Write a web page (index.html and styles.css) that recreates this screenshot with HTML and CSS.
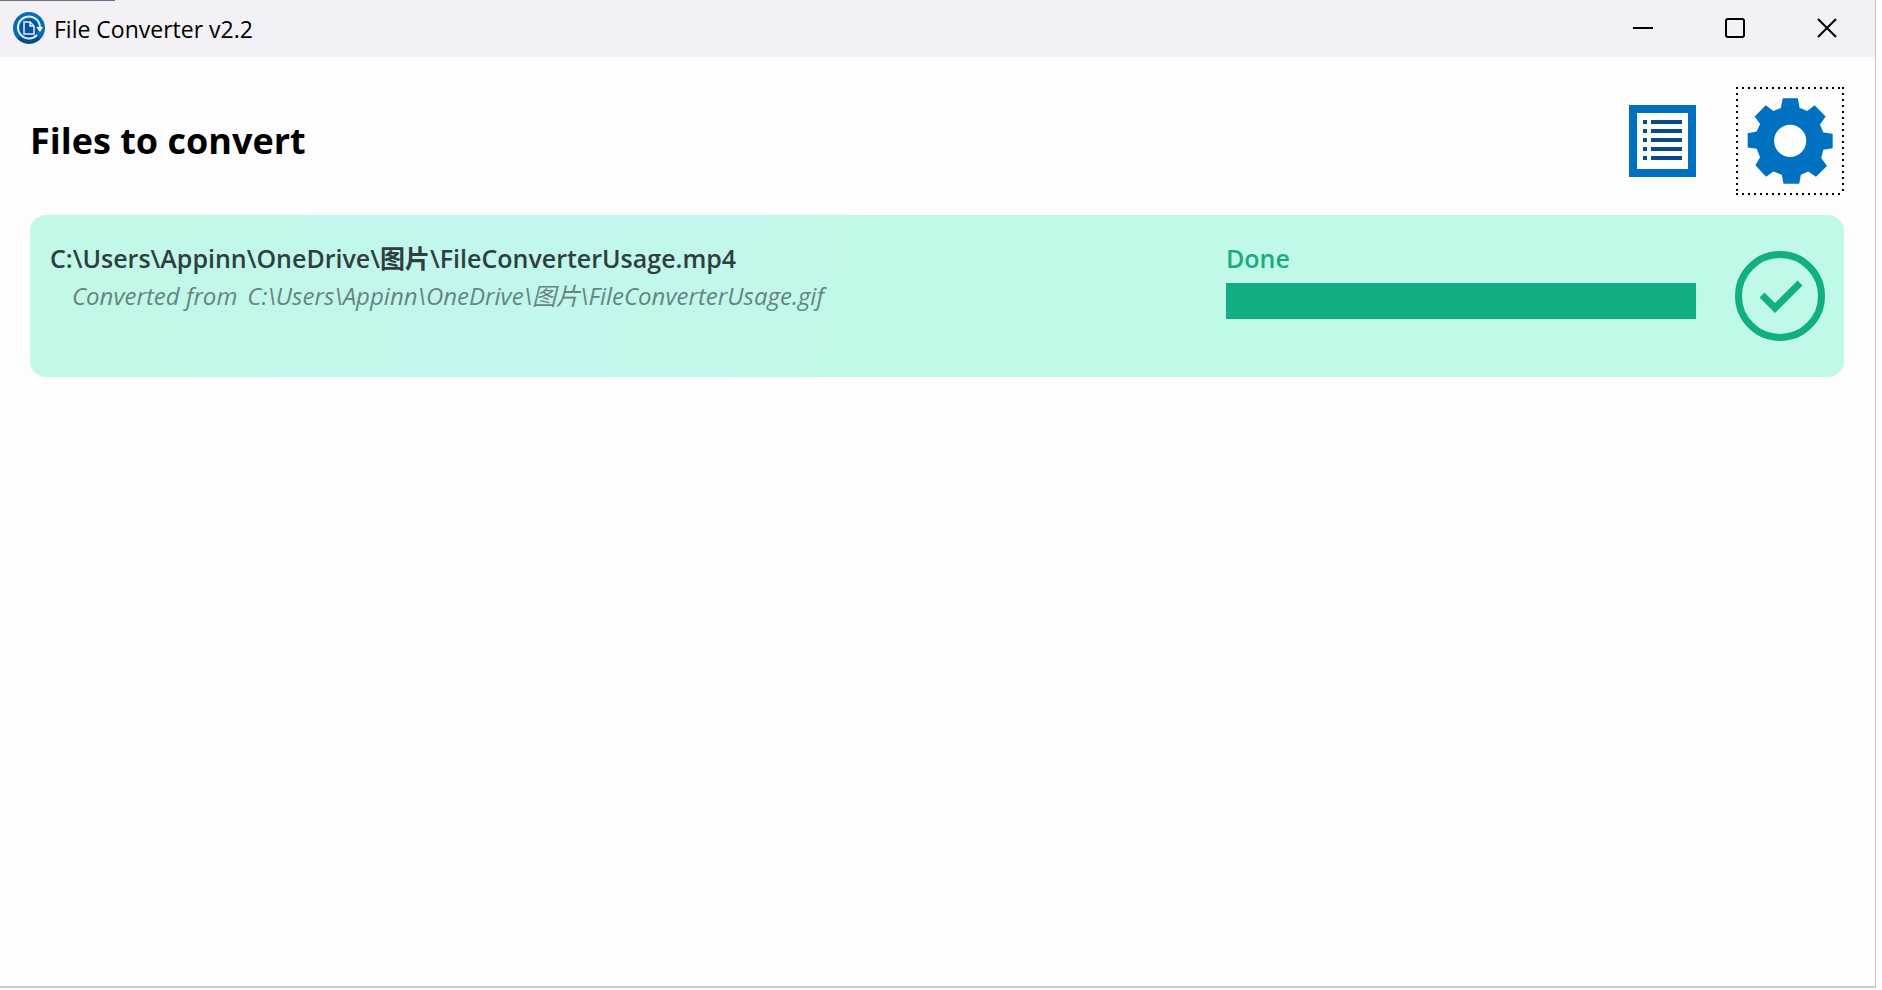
FILE: index.html
```
<!DOCTYPE html>
<html lang="en">
<head>
    <meta charset="UTF-8">
    <meta name="viewport" content="width=device-width, initial-scale=1.0">
    <title>File Converter v2.2</title>
    <link rel="stylesheet" href="styles.css">
</head>
<body>
<div class="window">
    <header class="titlebar">
        <svg class="app-icon" viewBox="0 0 32 32" aria-hidden="true">
            <circle cx="16" cy="16" r="16" fill="#0a6cb8"/>
            <path d="M5 27 A16 16 0 0 0 27 27 L24 22 L8 22Z" fill="#07498b"/>
            <circle cx="16" cy="16" r="9" fill="#07529a"/>
            <path d="M24 23 A11 11 0 1 1 27 15" fill="none" stroke="#e4f1fb" stroke-width="2"/>
            <path d="M23 15h7l-3 5z" fill="#fff"/>
            <path d="M11 10h6l4 4v8H11z M17 10v4h4" fill="none" stroke="#e4f1fb" stroke-width="1.5"/>
        </svg>
        <span class="caption">File Converter v2.2</span>
        <div class="controls">
            <button type="button" aria-label="Minimize">
                <svg viewBox="0 0 20 20"><path d="M0 10h20"/></svg>
            </button>
            <button type="button" aria-label="Maximize">
                <svg viewBox="0 0 20 20"><rect x="1" y="1" width="18" height="18" rx="2"/></svg>
            </button>
            <button type="button" aria-label="Close">
                <svg viewBox="0 0 20 20"><path d="M1 1l18 18M19 1L1 19"/></svg>
            </button>
        </div>
    </header>

    <main>
        <div class="toolbar">
            <h1>Files to convert</h1>
            <button type="button" class="tool" aria-label="Show logs">
                <svg class="list-icon" viewBox="0 0 67 72">
                    <rect x="4" y="4" width="59" height="64" fill="#fff" stroke="#0070c0" stroke-width="8"/>
                    <path d="M14 17h4M14 26h4M14 35h4M14 44h4M14 53h4M22 17h31M22 26h31M22 35h31M22 44h31M22 53h31" stroke="#064b8f" stroke-width="4"/>
                </svg>
            </button>
            <button type="button" class="tool focused" aria-label="Settings">
                <svg class="gear-icon" viewBox="0 0 257 257">
                    <path fill="#0070c0" fill-rule="evenodd" d="M107 1H152L157 29L180 39L202 22L235 55L218 79L228 103L256 107V150L228 155L222 179L239 203L206 235L183 220L161 229L156 256H109L104 229L79 220L57 235L25 201L39 177L29 152L2 148V105L29 100L39 78L23 55L56 22L79 39L101 30Z M129 80A48 48 0 1 0 129 176A48 48 0 1 0 129 80Z"/>
                </svg>
            </button>
        </div>

        <section class="job">
            <div class="paths">
                <h2>C:\Users\Appinn\OneDrive\图片\FileConverterUsage.mp4</h2>
                <p><span>Converted from</span><span>C:\Users\Appinn\OneDrive\图片\FileConverterUsage.gif</span></p>
            </div>
            <div class="status">
                <label for="job-progress">Done</label>
                <progress id="job-progress" value="100" max="100"></progress>
            </div>
            <svg class="check-icon" viewBox="0 0 90 90" aria-hidden="true">
                <circle cx="45" cy="45" r="41.5"/>
                <path d="M27 44L40 57L65 32"/>
            </svg>
        </section>
    </main>
</div>
</body>
</html>
```
FILE: styles.css
```
* {
    box-sizing: border-box;
}

body {
    margin: 0;
    background: #fff;
    color: #000;
    font-family: "Open Sans", "Noto Sans CJK SC", sans-serif;
}

.window {
    position: relative;
    min-height: calc(100vh - 2px);
    margin: 0 6px 2px 0;
    background: #fdfdfd;
    border-right: 1px solid #c4c4c6;
    border-bottom: 2px solid #cbcbcb;
}

/* sliver of the window behind */
.window::before {
    content: "";
    position: absolute;
    top: 0;
    left: 0;
    width: 115px;
    height: 1px;
    background: linear-gradient(90deg, #77727c, #5f7190);
}

/* title bar */
.titlebar {
    display: flex;
    align-items: center;
    padding: 0 0 1px 13px;
    background: #f3f1f5;
}

.app-icon {
    width: 32px;
    height: 32px;
}

.caption {
    flex: 1;
    margin-left: 9px;
    padding-top: 2px;
    font-size: 23px;
    line-height: 32px;
}

.controls {
    display: flex;
    padding-right: 2px;
}

button {
    display: flex;
    align-items: center;
    justify-content: center;
    padding: 0;
    border: 0;
    background: none;
}

.controls button {
    width: 92px;
    height: 56px;
}

.controls svg {
    width: 20px;
    height: 20px;
    fill: none;
    stroke: #000;
    stroke-width: 2;
}

main {
    padding: 30px 31px 30px 30px;
}

.toolbar {
    display: flex;
    align-items: center;
    gap: 20px;
}

h1 {
    flex: 1;
    margin: 0;
    font-size: 36px;
    font-weight: 700;
    line-height: 48px;
}

.tool {
    width: 108px;
    height: 108px;
}

/* dotted focus rectangle, one dot every 6px */
.focused {
    background:
        linear-gradient(90deg, #000 2px, transparent 2px) 0 0 / 6px 2px repeat-x,
        linear-gradient(90deg, #000 2px, transparent 2px) 0 100% / 6px 2px repeat-x,
        linear-gradient(#000 2px, transparent 2px) 0 0 / 2px 6px repeat-y,
        linear-gradient(#000 2px, transparent 2px) 100% 0 / 2px 6px repeat-y;
}

.list-icon {
    width: 67px;
    height: 72px;
}

.gear-icon {
    width: 86px;
    height: 86px;
}

/* conversion job */
.job {
    display: flex;
    align-items: flex-start;
    min-height: 162px;
    margin-top: 20px;
    padding: 25px 19px 20px 20px;
    border-radius: 16px;
    background: linear-gradient(100deg, #c1f8e8 8%, #c2f7ed 24%, #c2f7ec 36%, #c1f9e8 46%);
}

.paths {
    flex: 1;
}

h2 {
    margin: 0;
    color: #2f3f40;
    font-size: 25px;
    font-weight: 600;
    line-height: 36px;
}

.paths p {
    display: flex;
    gap: 10px;
    margin: 0 0 0 22px;
    color: #66857f;
    font-size: 24px;
    font-style: italic;
    line-height: 40px;
}

.status {
    display: flex;
    flex-direction: column;
    width: 470px;
    margin-right: 39px;
}

.status label {
    color: #18ac82;
    font-size: 25px;
    font-weight: 600;
    line-height: 36px;
}

progress {
    width: 100%;
    height: 36px;
    margin-top: 7px;
    border: 0;
    appearance: none;
    background: #c1f9e8;
}

progress::-webkit-progress-bar {
    background: #c1f9e8;
}

progress::-webkit-progress-value {
    background: #12ae83;
}

.check-icon {
    width: 90px;
    height: 90px;
    margin-top: 11px;
    fill: none;
    stroke: #12b080;
    stroke-width: 7;
}
```
